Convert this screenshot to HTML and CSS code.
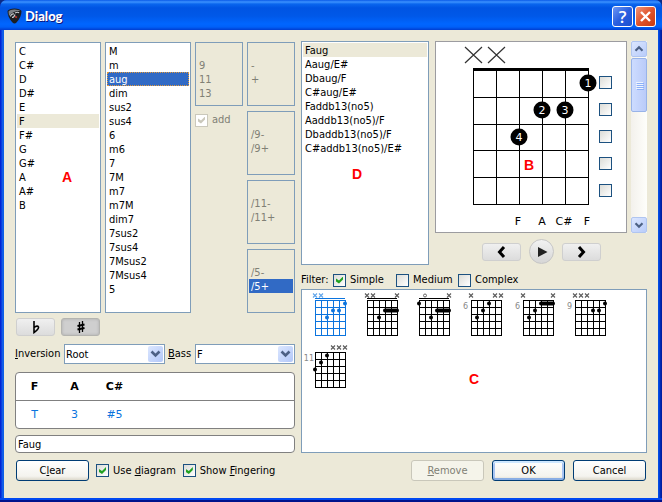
FILE: index.html
```html
<!DOCTYPE html>
<html lang="en">
<head>
<meta charset="utf-8">
<title>Dialog</title>
<link rel="stylesheet" href="styles.css">
</head>
<body>
<svg class="defs" aria-hidden="true">
  <defs>
    <path id="grid" d="M13.5 10v36M19.5 10v36M25.5 10v36M31.5 10v36M37.5 10v36M43.5 10v36M13 10.5h31M13 17.5h31M13 24.5h31M13 31.5h31M13 38.5h31M13 45.5h31" fill="none" stroke="currentColor"/>
    <path id="nut" d="M13 8.5h30" stroke="currentColor"/>
    <path id="mute" d="M-2 -2l4 4M2 -2l-4 4" stroke="currentColor" stroke-width="1.1" opacity=".65" fill="none"/>
    <circle id="dot" r="2" fill="currentColor"/>
    <path id="bar" d="M0 0h12" stroke="currentColor" stroke-width="4" stroke-linecap="round"/>
    <path id="chevron" d="M3.500 5.500l4 4 4-4" fill="none" stroke="#4d6185" stroke-width="2.600"/>
  </defs>
</svg>
<div class="window">
  <header class="titlebar">
    <svg class="logo" viewBox="0 0 15 17" aria-hidden="true">
      <path d="M.5 3Q2 .5 7.500 .5Q13 .5 14.500 3Q14.500 9 9.500 14.500Q7.500 16.500 5.500 14.500Q.5 9 .5 3Z" fill="#1c1e21"/>
      <path d="M1.500 3.500Q3 1.500 7.500 1.500Q12 1.500 13 3Q10 2.500 7 4Q4 5 2 8Z" fill="#7d8186"/>
      <path d="M3.500 8.500Q4 5.500 7 6M5 9.500Q7 9.500 8 6.500M8 5Q11 3.500 12 5" fill="none" stroke="#c9cdd0" stroke-width="1.200"/>
      <path d="M8 8.500l2 1" stroke="#b8322a" stroke-width="1.800"/>
    </svg>
    <h1>Dialog</h1>
    <button class="caption help" aria-label="Help">?</button>
    <button class="caption close" aria-label="Close"><svg viewBox="0 0 19 19"><path d="M5 5l9 9M14 5l-9 9" stroke="#fff" stroke-width="2.400"/></svg></button>
  </header>
  <main class="body">
    <div class="columns">
      <section class="left">
        <div class="pickers">
          <ul class="list note" role="listbox" aria-label="Root note">
            <li>C</li><li>C#</li><li>D</li><li>D#</li><li>E</li><li class="inactive">F</li><li>F#</li><li>G</li><li>G#</li><li>A</li><li>A#</li><li>B</li>
          </ul>
          <ul class="list kind" role="listbox" aria-label="Chord type">
            <li>M</li><li>m</li><li class="selected focus">aug</li><li>dim</li><li>sus2</li><li>sus4</li><li>6</li><li>m6</li><li>7</li><li>7M</li><li>m7</li><li>m7M</li><li>dim7</li><li>7sus2</li><li>7sus4</li><li>7Msus2</li><li>7Msus4</li><li>5</li>
          </ul>
          <div class="stack">
            <ul class="list off" role="listbox" aria-label="Extension"><li></li><li>9</li><li>11</li><li>13</li></ul>
            <label class="check add"><input type="checkbox" checked disabled><span>add</span></label>
          </div>
          <div class="stack">
            <ul class="list off" role="listbox" aria-label="Alteration"><li></li><li>-</li><li>+</li></ul>
            <ul class="list off" role="listbox" aria-label="Ninth"><li></li><li>/9-</li><li>/9+</li></ul>
            <ul class="list off" role="listbox" aria-label="Eleventh"><li></li><li>/11-</li><li>/11+</li></ul>
            <ul class="list off" role="listbox" aria-label="Fifth"><li></li><li>/5-</li><li class="selected">/5+</li></ul>
          </div>
          <span class="mark mark-a">A</span>
        </div>
        <div class="accidentals">
          <button class="soft" aria-label="Flat"><svg viewBox="0 0 12 14"><path d="M4 1v11.500Q9 9 8.500 7Q7.500 5 4 7.500" fill="none" stroke="#000" stroke-width="1.600"/></svg></button>
          <button class="soft pressed" aria-label="Sharp"><svg viewBox="0 0 12 14"><path d="M4.500 2v11M7.500 1v11" stroke="#000" stroke-width="1.300"/><path d="M2.500 6l7-1.500M2.500 9.500l7-1.500" stroke="#000" stroke-width="2"/></svg></button>
        </div>
        <div class="voicing">
          <label for="inversion"><u>I</u>nversion</label>
          <span class="combo"><select id="inversion"><option>Root</option></select><svg viewBox="0 0 15 16"><use href="#chevron"/></svg></span>
          <label for="bass"><u>B</u>ass</label>
          <span class="combo"><select id="bass"><option>F</option></select><svg viewBox="0 0 15 16"><use href="#chevron"/></svg></span>
        </div>
        <table class="tones">
          <tr><th>F</th><th>A</th><th>C#</th><th></th></tr>
          <tr><td>T</td><td>3</td><td>#5</td><td></td></tr>
        </table>
        <input class="name" type="text" value="Faug" aria-label="Chord name">
      </section>
      <section class="right">
        <div class="upper">
          <ul class="list chords" role="listbox" aria-label="Chord names">
            <li class="inactive">Faug</li><li>Aaug/E#</li><li>Dbaug/F</li><li>C#aug/E#</li><li>Faddb13(no5)</li><li>Aaddb13(no5)/F</li><li>Dbaddb13(no5)/F</li><li>C#addb13(no5)/E#</li>
          </ul>
          <span class="mark mark-d">D</span>
          <div class="editor">
            <div class="fretrow">
              <div class="fretboard">
                <svg class="neck" viewBox="0 0 162 190" role="img" aria-label="Chord diagram">
                  <path d="M29 5l17 16M46 5l-17 16M52 5l17 16M69 5l-17 16" stroke="#333" stroke-width="1.200"/>
                  <path d="M37 27.500h116" stroke="#000" stroke-width="3"/>
                  <path d="M37.500 27v136M60.500 27v136M83.500 27v136M106.500 27v136M129.500 27v136M152.500 27v136M37 55.500h116M37 82.500h116M37 108.500h116M37 135.500h116M37 162.500h116" stroke="#000"/>
                  <g><circle cx="152" cy="41" r="8.500"/><circle cx="106" cy="68" r="8.500"/><circle cx="129" cy="68" r="8.500"/><circle cx="83" cy="95" r="8.500"/></g>
                  <g class="finger"><text x="152" y="45">1</text><text x="106" y="72">2</text><text x="129" y="72">3</text><text x="83" y="99">4</text></g>
                  <g class="pitch"><text x="82" y="183">F</text><text x="106" y="183">A</text><text x="128" y="183">C#</text><text x="151" y="183">F</text></g>
                </svg>
                <div class="barres">
                  <input type="checkbox" aria-label="Barre fret 1"><input type="checkbox" aria-label="Barre fret 2"><input type="checkbox" aria-label="Barre fret 3"><input type="checkbox" aria-label="Barre fret 4"><input type="checkbox" aria-label="Barre fret 5">
                </div>
                <span class="mark mark-b">B</span>
              </div>
              <div class="scroll">
                <button aria-label="Scroll up"><svg viewBox="0 0 15 16"><path d="M3.500 10l4-4 4 4" fill="none" stroke="#4d6185" stroke-width="2.500"/></svg></button>
                <div class="thumb"><i></i><i></i><i></i><i></i></div>
                <button class="down" aria-label="Scroll down"><svg viewBox="0 0 15 16"><path d="M3.500 6l4 4 4-4" fill="none" stroke="#4d6185" stroke-width="2.500"/></svg></button>
              </div>
            </div>
            <div class="transport">
              <button class="soft" aria-label="Previous"><svg viewBox="0 0 12 14"><path d="M8 2L3.500 7l4.500 5" fill="none" stroke="#000" stroke-width="3"/></svg></button>
              <button class="play" aria-label="Play"><svg viewBox="0 0 12 14"><path d="M2 2l9.500 5L2 12z" fill="#222"/></svg></button>
              <button class="soft" aria-label="Next"><svg viewBox="0 0 12 14"><path d="M3 2l4.500 5L3 12" fill="none" stroke="#000" stroke-width="3"/></svg></button>
            </div>
          </div>
        </div>
        <div class="filter">
          <span class="caption-text">Filter:</span>
          <label class="check simple"><input type="checkbox" checked><span>Simple</span></label>
          <label class="check medium"><input type="checkbox"><span>Medium</span></label>
          <label class="check"><input type="checkbox"><span>Complex</span></label>
        </div>
        <div class="gallery">
          <svg class="thumbnail current" viewBox="0 0 52 52"><use href="#nut"/><use href="#grid"/><use href="#mute" x="13" y="5.500"/><use href="#mute" x="19" y="5.500"/><use href="#dot" x="43" y="13.500"/><use href="#dot" x="31" y="20.500"/><use href="#dot" x="37" y="20.500"/><use href="#dot" x="25" y="27.500"/></svg>
          <svg class="thumbnail" viewBox="0 0 52 52"><use href="#nut"/><use href="#grid"/><use href="#mute" x="13" y="5.500"/><use href="#mute" x="19" y="5.500"/><use href="#mute" x="43" y="5.500"/><use href="#bar" x="31" y="20.500"/><use href="#dot" x="25" y="27.500"/></svg>
          <svg class="thumbnail" viewBox="0 0 52 52"><use href="#nut"/><use href="#grid"/><circle cx="19" cy="5.500" r="1.500" fill="none" stroke="#666"/><use href="#mute" x="43" y="5.500"/><use href="#dot" x="13" y="13.500"/><use href="#bar" x="31" y="20.500"/><use href="#dot" x="25" y="27.500"/></svg>
          <svg class="thumbnail" viewBox="0 0 52 52"><text x="10" y="19">6</text><use href="#grid"/><use href="#mute" x="13" y="5.500"/><use href="#mute" x="37" y="5.500"/><use href="#mute" x="43" y="5.500"/><use href="#dot" x="31" y="13.500"/><use href="#dot" x="25" y="20.500"/><use href="#dot" x="19" y="27.500"/></svg>
          <svg class="thumbnail" viewBox="0 0 52 52"><text x="10" y="19">6</text><use href="#grid"/><use href="#mute" x="13" y="5.500"/><use href="#mute" x="43" y="5.500"/><use href="#bar" x="31" y="13.500"/><use href="#dot" x="25" y="20.500"/><use href="#dot" x="19" y="27.500"/></svg>
          <svg class="thumbnail" viewBox="0 0 52 52"><text x="10" y="19">9</text><use href="#grid"/><use href="#mute" x="13" y="5.500"/><use href="#mute" x="19" y="5.500"/><use href="#mute" x="25" y="5.500"/><use href="#dot" x="43" y="13.500"/><use href="#dot" x="31" y="20.500"/><use href="#dot" x="37" y="20.500"/></svg>
          <svg class="thumbnail" viewBox="0 0 52 52"><text x="12" y="19">11</text><use href="#grid"/><use href="#mute" x="31" y="5.500"/><use href="#mute" x="37" y="5.500"/><use href="#mute" x="43" y="5.500"/><use href="#dot" x="25" y="13.500"/><use href="#dot" x="19" y="20.500"/><use href="#dot" x="13" y="27.500"/></svg>
          <span class="mark mark-c">C</span>
        </div>
      </section>
    </div>
    <footer class="actions">
      <div class="group">
        <button class="push">C<u>l</u>ear</button>
        <label class="check"><input type="checkbox" checked><span>Use <u>d</u>iagram</span></label>
        <label class="check"><input type="checkbox" checked><span>Show <u>F</u>ingering</span></label>
      </div>
      <button class="push" disabled><u>R</u>emove</button>
      <button class="push default">OK</button>
      <button class="push">Cancel</button>
    </footer>
  </main>
</div>
</body>
</html>
```
FILE: styles.css
```css
* { box-sizing: border-box; }

body {
  margin: 0;
  background: #0b2a86;
  font: 11px/14px "DejaVu Sans Condensed", "DejaVu Sans", sans-serif;
  color: #000;
}

button, input, select { font: inherit; color: inherit; margin: 0; padding: 0; }
ul { list-style: none; margin: 0; }
.defs { position: absolute; width: 0; height: 0; }

.window {
  display: flex;
  flex-direction: column;
  min-height: 100vh;
  padding: 0 4px 4px;
  background: linear-gradient(90deg, #0019cf, #0831d9 1px, #166aee 3px, #0855dd 4px, #0855dd calc(100% - 4px), #0046e8 calc(100% - 3px), #001ea0 calc(100% - 1px));
  box-shadow: inset 0 -2px #00138c, inset 0 -4px #0048f1;
  border-radius: 7px 7px 0 0;
}

.titlebar {
  display: flex;
  align-items: center;
  gap: 2px;
  height: 30px;
  margin: 0 -4px;
  padding: 2px 6px 0 7px;
  border-radius: 7px 7px 0 0;
  background: linear-gradient(#0a5ae8, #3c92ff 2px, #0a66ee 4px, #0054e3 8px, #0058e8 16px, #0066ff 24px, #0060f8 27px, #003dd0 30px);
}
.titlebar h1 {
  flex: 1;
  margin: 0 0 0 1px;
  font: 900 13px/16px Lato, sans-serif;
  color: #fff;
  text-shadow: 1px 1px #0a1883;
}
.logo { width: 15px; height: 17px; }
.caption {
  width: 21px;
  height: 21px;
  border: 1px solid #fff;
  border-radius: 3px;
  color: #fff;
  font: 600 17px/19px "Open Sans", sans-serif;
}
.caption svg { display: block; }
.help { background: linear-gradient(135deg, #6d97f5, #2a5fdf 50%, #1b4fd0); }
.close { background: linear-gradient(135deg, #f0957a, #e0542c 50%, #c83a10); }

.body {
  display: flex;
  flex: 1;
  flex-direction: column;
  gap: 7px;
  padding: 11px 11px 0;
  background: #ece9d8;
}
.columns { display: flex; gap: 6px; }
.left { display: flex; flex-direction: column; flex: 0 0 280px; padding-top: 1px; }
.right { display: flex; flex-direction: column; flex: 1; }

.list {
  padding: 1px;
  border: 1px solid #7f9db9;
  background: #fff;
}
.list li { height: 14px; padding-left: 2px; line-height: 16px; white-space: nowrap; }
.list .inactive { background: #ece9d8; }
.list .selected { background: #316ac5; color: #fff; }
.list .focus { outline: 1px dotted #e39a3b; outline-offset: -1px; }
.off { height: 64px; background: transparent; color: #808075; }

.pickers { position: relative; display: flex; gap: 4px; height: 271px; }
.note, .kind { flex: 1; }
.stack { display: flex; flex-direction: column; gap: 5px; flex: 0 0 48px; }

.mark {
  position: absolute;
  font: bold 14px/14px "Liberation Sans", sans-serif;
  color: #f00;
}
.mark-a { left: 47px; top: 128px; }
.mark-b { left: 88px; top: 116px; }
.mark-c { left: 167px; top: 82px; }
.mark-d { left: 51px; top: 126px; }

.check { display: flex; align-items: center; gap: 4px; white-space: nowrap; }
input[type="checkbox"] {
  appearance: none;
  width: 13px;
  height: 13px;
  border: 1px solid #1c5180;
  background: linear-gradient(135deg, #dcdcd7, #fff);
}
input[type="checkbox"]:checked { display: grid; place-items: center; }
input[type="checkbox"]:checked::before {
  content: "";
  width: 7px;
  height: 7px;
  background: #21a121;
  clip-path: polygon(0 2px, 3px 4px, 7px 0, 7px 3px, 3px 7px, 0 5px);
}
input[type="checkbox"]:disabled { border-color: #cac8bb; background: #fff; }
input[type="checkbox"]:disabled::before { background: #cac8bb; }
.add { margin-top: 2px; color: #808075; }

.accidentals { display: flex; gap: 6px; margin: 5px 1px 0; }
.soft {
  display: grid;
  place-items: center;
  width: 39px;
  height: 18px;
  border: 1px solid #cfcfcf;
  border-radius: 3px;
  background: linear-gradient(#f0f0f0, #dcdcdc);
}
.soft svg, .play svg { width: 12px; height: 14px; }
.pressed { border-color: #b4b4b0; background: #cfcfcf; box-shadow: inset 0 0 3px #aaa; }

.voicing { display: grid; grid-template-columns: 46px 101px 24px 100px; gap: 3px; align-items: center; margin-top: 8px; }
.voicing label { white-space: nowrap; }
.combo { position: relative; display: block; height: 20px; }
.combo select {
  appearance: none;
  width: 100%;
  height: 20px;
  padding: 1px 0 0 1px;
  border: 1px solid #7f9db9;
  border-radius: 0;
  background: #fff;
}
.combo svg {
  position: absolute;
  right: 2px;
  top: 2px;
  width: 15px;
  height: 16px;
  border-radius: 2px;
  background: linear-gradient(135deg, #dce7ff, #b2c7f8);
  pointer-events: none;
}

.tones {
  width: 100%;
  height: 57px;
  margin-top: 8px;
  border: 1px solid #808080;
  border-radius: 4px;
  border-spacing: 0;
  background: #fff;
  table-layout: fixed;
  font: 11px/14px "DejaVu Sans", sans-serif;
}
.tones th, .tones td { width: 40px; padding: 1px 3px 0 0; }
.tones th { border-bottom: 1px solid #808080; }
.tones td { color: #0b74de; text-align: center; }
.tones th:last-child, .tones td:last-child { width: auto; }

.name {
  width: 100%;
  height: 18px;
  margin-top: 6px;
  padding: 1px 2px 0;
  border: 1px solid #808080;
  border-radius: 4px;
  background: #fff;
}

.upper { position: relative; display: flex; gap: 6px; }
.chords { flex: 1; height: 224px; }
.editor { flex: 0 0 212px; }
.fretrow { display: flex; gap: 4px; }
.fretboard { position: relative; display: flex; width: 192px; height: 192px; border: 1px solid #9c9ca0; background: #fff; }
.neck { width: 162px; height: 190px; }
.neck text { text-anchor: middle; font: 11px "DejaVu Sans", sans-serif; }
.finger { fill: #fff; }
.barres { display: flex; flex-direction: column; gap: 14px; padding: 34px 0 0 1px; }
.scroll { display: flex; flex-direction: column; width: 16px; background: linear-gradient(90deg, #f3f1ec, #fefefb); }
.scroll button, .thumb {
  width: 16px;
  height: 16px;
  border: 1px solid #b0c5f0;
  border-radius: 2px;
  background: linear-gradient(135deg, #dbe6ff, #b9ccfa);
}
.scroll svg { display: block; width: 14px; height: 14px; }
.thumb { display: flex; flex-direction: column; align-items: center; justify-content: center; gap: 1px; height: 54px; margin-top: 1px; background: linear-gradient(90deg, #cddcff, #bacbf9); border-color: #98b3e8; }
.thumb i { width: 7px; height: 1px; background: #eef4fe; box-shadow: 1px 1px #8cb0f8; }
.scroll .down { margin-top: auto; }

.transport { display: flex; align-items: center; gap: 8px; padding: 6px 0 0 47px; }
.play {
  display: grid;
  place-items: center;
  width: 25px;
  height: 25px;
  border: 1px solid #c6c6c6;
  border-radius: 50%;
  background: linear-gradient(#f2f2f2, #d6d6d6);
}

.filter { display: flex; align-items: center; height: 14px; margin: 8px 0 2px; }
.caption-text { width: 32px; }
.simple { width: 63px; }
.medium { width: 62px; }
.gallery {
  position: relative;
  display: flex;
  flex-wrap: wrap;
  align-content: flex-start;
  height: 164px;
  padding-right: 24px;
  border: 1px solid #7f9db9;
  background: #fff;
}
.thumbnail { width: 52px; height: 52px; }
.thumbnail text { text-anchor: end; font: 8px "DejaVu Sans", sans-serif; fill: #888; }
.current { color: #0b74de; }

.actions { display: flex; align-items: center; gap: 8px; margin: 0 1px; }
.group { display: flex; flex: 1; align-items: center; gap: 7px; }
.push {
  width: 73px;
  height: 21px;
  border: 1px solid #003c74;
  border-radius: 3px;
  background: linear-gradient(#fff, #f4f3ee 80%, #dcd8cb);
}
.default { box-shadow: inset 0 2px #cee7ff, inset 0 -2px #89ade4, inset 2px 0 #a8c4f2, inset -2px 0 #a8c4f2; }
.push:disabled { border-color: #c9c7ba; background: #f5f4ea; color: #808075; }
```
